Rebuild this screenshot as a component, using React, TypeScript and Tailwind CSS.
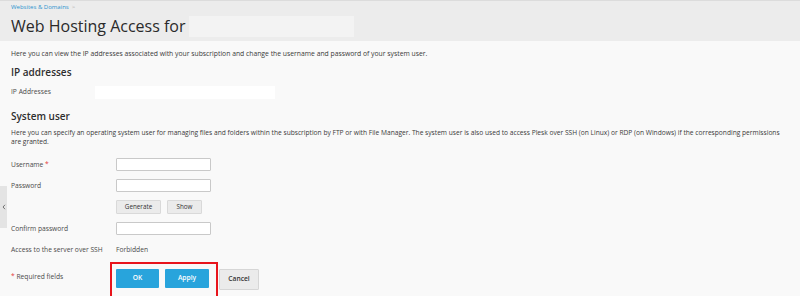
import React from "react";

const font = { fontFamily: '"Open Sans", "Liberation Sans", sans-serif' };

function Row({ label, children, mt }: { label: React.ReactNode; children: React.ReactNode; mt: string }) {
  return (
    <div className={`flex items-center ${mt}`}>
      <div className="w-[105px] shrink-0 text-[6.7px] leading-[9px] text-[#4a4a4a]">{label}</div>
      <div className="flex items-center">{children}</div>
    </div>
  );
}

function Input() {
  return <div className="w-[95px] h-[13px] bg-white border border-[#c9c9c9] rounded-[1px]" />;
}

export default function App() {
  return (
    <div className="relative w-[800px] h-[296px] overflow-hidden bg-[#f9f9f9]" style={font}>
      {/* header */}
      <div className="h-[41px] bg-[#ececec] border-t border-[#dcdcdc] pl-[11px]">
        <div className="flex items-center pt-[2px] text-[6px] leading-[9px]">
          <span className="text-[#2b93cf]">Websites &amp; Domains</span>
          <span className="ml-[3px] text-[#b0b0b0]">&gt;</span>
        </div>
        <div className="flex items-center mt-[3px]">
          <h1 className="text-[16px] leading-[22px] text-[#2a2a2a] font-normal">Web Hosting Access for</h1>
          <div className="ml-[3px] w-[165px] h-[21px] bg-[#f3f3f3]" />
        </div>
      </div>

      <div className="px-[11px]">
        <p className="mt-[8px] text-[6.8px] leading-[10px] text-[#3a3a3a] whitespace-nowrap">
          Here you can view the IP addresses associated with your subscription and change the username and password of your system user.
        </p>

        <h2 className="mt-[6px] text-[10px] leading-[14px] font-semibold text-[#2e2e2e]">IP addresses</h2>
        <div className="flex items-center mt-[7px] h-[13px]">
          <div className="w-[84px] shrink-0 text-[6.7px] text-[#4a4a4a]">IP Addresses</div>
          <div className="w-[180px] h-[13px] bg-white" />
        </div>

        <h2 className="mt-[10px] text-[10px] leading-[14px] font-semibold text-[#2e2e2e]">System user</h2>
        <p className="mt-[5px] text-[6.65px] leading-[9px] text-[#3a3a3a] whitespace-nowrap">
          Here you can specify an operating system user for managing files and folders within the subscription by FTP or with File Manager. The system user is also used to access Plesk over SSH (on Linux) or RDP (on Windows) if the corresponding permissions
          <br />
          are granted.
        </p>

        <Row mt="mt-[12px]" label={<span>Username <span className="text-[#e5383b]">*</span></span>}>
          <Input />
        </Row>
        <Row mt="mt-[8px]" label="Password">
          <Input />
        </Row>
        <Row mt="mt-[8px]" label="">
          <div className="flex gap-[6px]">
            <button className="w-[45px] h-[14px] bg-[#ebebeb] border border-[#d9d9d9] rounded-[1px] text-[6.3px] text-[#333]">Generate</button>
            <button className="w-[35px] h-[14px] bg-[#ebebeb] border border-[#d9d9d9] rounded-[1px] text-[6.3px] text-[#333]">Show</button>
          </div>
        </Row>
        <Row mt="mt-[8px]" label="Confirm password">
          <Input />
        </Row>
        <Row mt="mt-[8px]" label="Access to the server over SSH">
          <span className="text-[6.7px] leading-[13px] text-[#4a4a4a]">Forbidden</span>
        </Row>

        <div className="flex items-start mt-[6px]">
          <div className="w-[99px] shrink-0 pt-[10px] text-[6.7px] leading-[9px] text-[#4a4a4a]">
            <span className="text-[#e5383b]">*</span> Required fields
          </div>
          <div className="flex items-start">
            <div className="flex gap-[6px] border-2 border-[#e8141c] pl-[4px] pr-[7px] pt-[5px] pb-[10px]">
              <button className="w-[43px] h-[19px] bg-[#28a4dc] text-white text-[6.7px] font-semibold rounded-[1px]">OK</button>
              <button className="w-[44px] h-[19px] bg-[#28a4dc] text-white text-[6.7px] font-semibold rounded-[1px]">Apply</button>
            </div>
            <button className="ml-[1px] mt-[7px] w-[40px] h-[21px] bg-[#ebebeb] border border-[#d6d6d6] rounded-[1px] text-[6.7px] font-semibold text-[#333]">Cancel</button>
          </div>
        </div>
      </div>

      {/* sidebar toggle */}
      <div className="absolute left-0 top-[186px] w-[7px] h-[42px] bg-[#e4e4e4] flex items-center justify-center">
        <svg width="4" height="6" viewBox="0 0 4 6" fill="none">
          <path d="M3 0.8 L1 3 L3 5.2" stroke="#666" strokeWidth="0.9" />
        </svg>
      </div>
    </div>
  );
}
